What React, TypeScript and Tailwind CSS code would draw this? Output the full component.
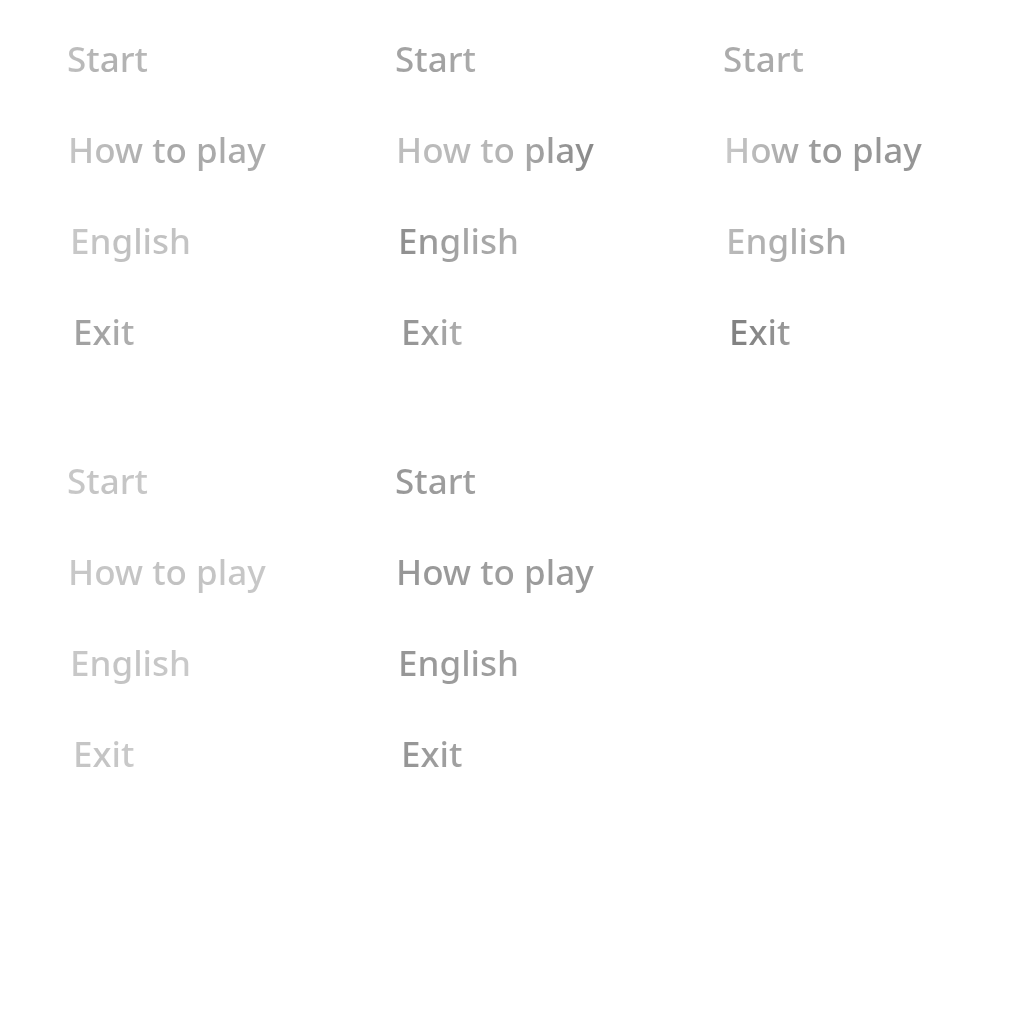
const menus: { label: string; tone: string; indent: string }[][] = [
  [
    { label: 'Start', tone: 'from-[#c0c0c0] via-[#b0b0b0] to-[#b8b8b8]', indent: 'ml-0' },
    { label: 'How to play', tone: 'from-[#c6c6c6] via-[#a8a8a8] to-[#acacac]', indent: 'ml-px' },
    { label: 'English', tone: 'from-[#c8c8c8] via-[#c0c0c0] to-[#c4c4c4]', indent: 'ml-[3px]' },
    { label: 'Exit', tone: 'from-[#a0a0a0] via-[#a4a4a4] to-[#b0b0b0]', indent: 'ml-[6px]' }
  ],
  [
    { label: 'Start', tone: 'from-[#a4a4a4] via-[#a0a0a0] to-[#acacac]', indent: 'ml-0' },
    { label: 'How to play', tone: 'from-[#bebebe] via-[#b6b6b6] to-[#888888]', indent: 'ml-px' },
    { label: 'English', tone: 'from-[#8e8e8e] via-[#a4a4a4] to-[#acacac]', indent: 'ml-[3px]' },
    { label: 'Exit', tone: 'from-[#949494] via-[#9c9c9c] to-[#b0b0b0]', indent: 'ml-[6px]' }
  ],
  [
    { label: 'Start', tone: 'from-[#acacac] via-[#a8a8a8] to-[#b4b4b4]', indent: 'ml-0' },
    { label: 'How to play', tone: 'from-[#cacaca] via-[#989898] to-[#959595]', indent: 'ml-px' },
    { label: 'English', tone: 'from-[#bababa] via-[#acacac] to-[#a4a4a4]', indent: 'ml-[3px]' },
    { label: 'Exit', tone: 'from-[#808080] via-[#888888] to-[#9c9c9c]', indent: 'ml-[6px]' }
  ],
  [
    { label: 'Start', tone: 'from-[#c8c8c8] via-[#c4c4c4] to-[#c8c8c8]', indent: 'ml-0' },
    { label: 'How to play', tone: 'from-[#c8c8c8] via-[#c2c2c2] to-[#c8c8c8]', indent: 'ml-px' },
    { label: 'English', tone: 'from-[#c8c8c8] via-[#c4c4c4] to-[#cacaca]', indent: 'ml-[3px]' },
    { label: 'Exit', tone: 'from-[#c6c6c6] via-[#c4c4c4] to-[#cacaca]', indent: 'ml-[6px]' }
  ],
  [
    { label: 'Start', tone: 'from-[#989898] via-[#9c9c9c] to-[#a0a0a0]', indent: 'ml-0' },
    { label: 'How to play', tone: 'from-[#969696] via-[#9e9e9e] to-[#989898]', indent: 'ml-px' },
    { label: 'English', tone: 'from-[#969696] via-[#9c9c9c] to-[#a0a0a0]', indent: 'ml-[3px]' },
    { label: 'Exit', tone: 'from-[#949494] via-[#9c9c9c] to-[#a2a2a2]', indent: 'ml-[6px]' }
  ]
]

function Menu({ items }: { items: (typeof menus)[number] }) {
  return (
    <div className="flex flex-col">
      {items.map(item => (
        <div key={item.label} className="h-[91px]">
          <span
            className={`${item.indent} inline-block bg-linear-to-r ${item.tone} bg-clip-text text-transparent text-[35px] font-medium leading-[44px]`}
          >
            {item.label}
          </span>
        </div>
      ))}
    </div>
  )
}

export default function App() {
  return (
    <div className="w-[1024px] h-[1024px] bg-white pl-[67px] pt-[37px] font-['Noto_Sans',sans-serif]">
      <div className="grid grid-cols-[328px_328px_328px] gap-y-[58px]">
        {menus.map((items, i) => (
          <Menu key={i} items={items} />
        ))}
      </div>
    </div>
  )
}
